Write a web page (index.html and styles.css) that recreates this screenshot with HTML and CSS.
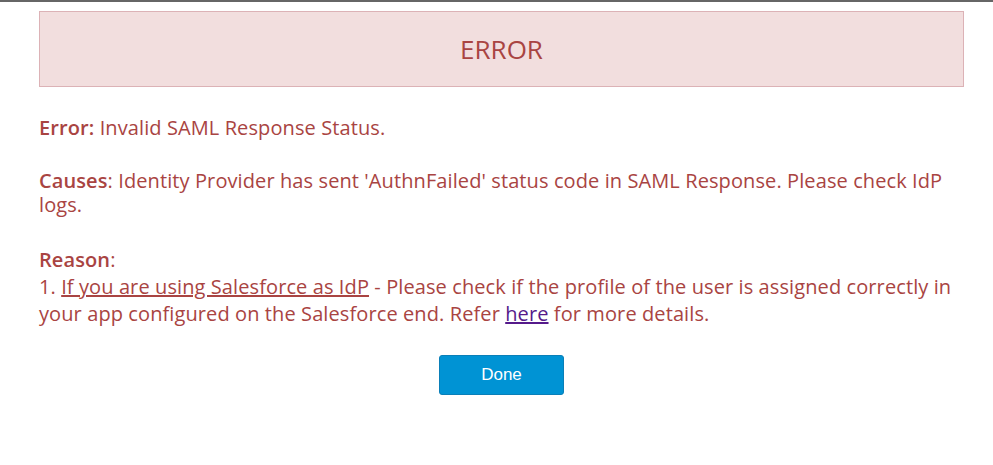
FILE: index.html
```html
<!DOCTYPE html>
<html lang="en">

<head>
  <meta charset="UTF-8">
  <meta name="viewport" content="width=device-width, initial-scale=1.0">
  <title>Error</title>
  <link rel="stylesheet" href="styles.css">
</head>

<body>
  <div class="page">
    <div class="alert-box">ERROR</div>

    <div class="message">
      <p><strong>Error:</strong> Invalid SAML Response Status.</p>
      <p><strong>Causes</strong>: Identity Provider has sent 'AuthnFailed' status code in SAML Response. Please check IdP logs.</p>
      <p class="reason"><strong>Reason</strong>:<br>
        1. <u>If you are using Salesforce as IdP</u> - Please check if the profile of the user is assigned correctly in your app configured on the Salesforce end. Refer <a href="#">here</a> for more details.</p>
    </div>

    <div class="actions">
      <button type="button" class="done-btn">Done</button>
    </div>
  </div>
</body>

</html>
```

FILE: styles.css
```css
* {
  margin: 0;
  padding: 0;
  box-sizing: border-box;
}

body {
  font-family: 'Open Sans', 'Lato', sans-serif;
  background-color: #fff;
  color: #a94442;
  border-top: 2px solid #666;
}

.page {
  padding: 9px 29px 0 39px;
}

.alert-box {
  height: 76px;
  display: flex;
  align-items: center;
  justify-content: center;
  background-color: #f2dede;
  border: 1px solid #dcb2b6;
  font-size: 26px;
  color: #a94442;
}

.message {
  padding-top: 29px;
  font-size: 20px;
  line-height: 24px;
  letter-spacing: 0.1px;
}

.message p {
  margin-bottom: 29px;
}

.message strong {
  font-weight: 600;
}

.message .reason {
  line-height: 27px;
  margin-bottom: 28px;
}

.message a {
  color: #551a8b;
}

.actions {
  display: flex;
  justify-content: center;
}

.done-btn {
  width: 125px;
  height: 40px;
  background-color: #0093d4;
  color: #fff;
  border: 1px solid #0a7fb8;
  border-radius: 3px;
  font-family: 'Liberation Sans', Arial, sans-serif;
  font-size: 17px;
}
```
